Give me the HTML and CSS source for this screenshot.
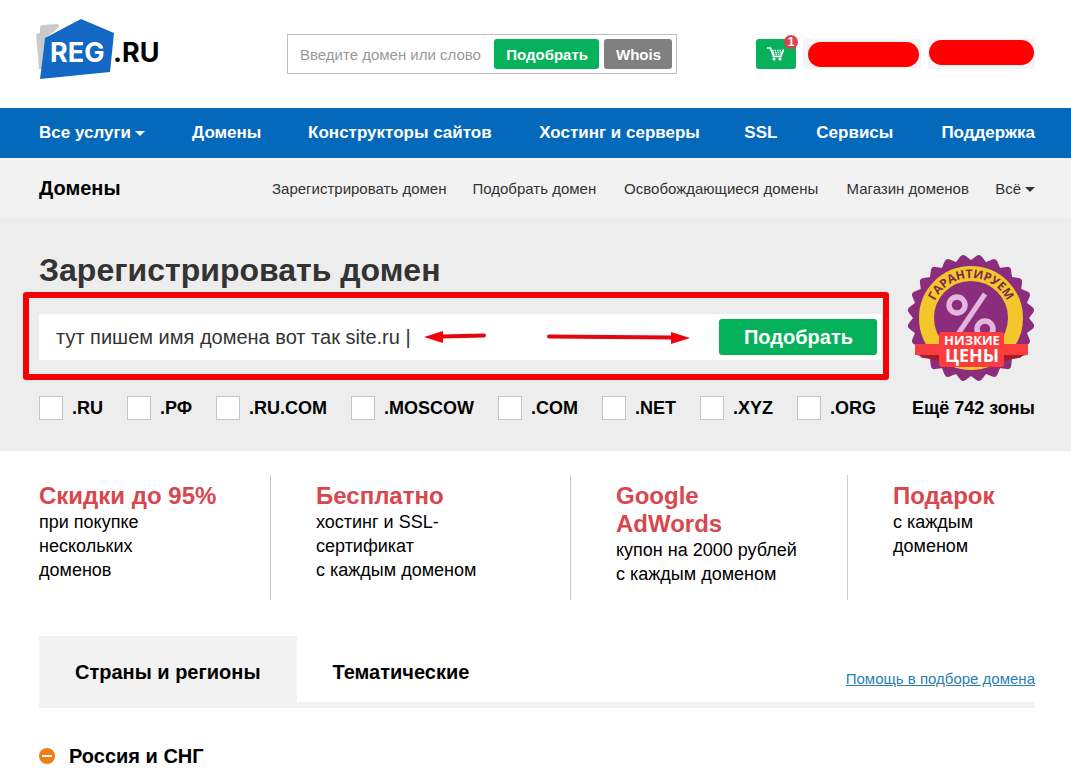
FILE: index.html
```html
<!DOCTYPE html>
<html lang="ru">
<head>
<meta charset="utf-8">
<title>REG.RU — Зарегистрировать домен</title>
<meta name="viewport" content="width=device-width, initial-scale=1">
<link rel="stylesheet" href="styles.css">
</head>
<body>
<header class="header wrap">
  <a class="logo" href="#" aria-label="REG.RU">
    <svg width="124" height="62" viewBox="0 0 124 62">
      <path fill="#c9caca" d="M0 15l4-1V9q0-3 3-3l14-1q2 0 2 3L9 20 5 50H3z"/>
      <path fill="#1268c3" d="M45 0l33 14-4 39-70 7L9 19z"/>
      <text class="logo-text logo-text-light" x="14" y="43">REG</text>
      <text class="logo-text" x="77" y="43">.RU</text>
    </svg>
  </a>
  <form class="quick">
    <input class="quick-input" type="text" placeholder="Введите домен или слово" aria-label="Домен или слово">
    <button class="btn btn-green" type="button">Подобрать</button>
    <button class="btn btn-grey" type="button">Whois</button>
  </form>
  <div class="account">
    <button class="cart" type="button" aria-label="Корзина">
      <svg width="18" height="14" viewBox="0 0 18 14" fill="none" stroke="#fff">
        <path stroke-width="1.600" d="M0 1h3.500l3 8.500h7.500L16.500 2.500"/>
        <path stroke-width="1.500" stroke-dasharray="1.500 1" d="M5 3.500h11M5.500 5.500h10M6 7.500h9"/>
        <circle cx="7" cy="12" r="1.600" fill="#fff" stroke="none"/>
        <circle cx="13" cy="12" r="1.600" fill="#fff" stroke="none"/>
      </svg>
      <span class="cart-count">1</span>
    </button>
    <button class="user user-login" type="button" aria-label="Вход"><span class="mask"></span></button>
    <button class="user user-signup" type="button" aria-label="Регистрация"><span class="mask"></span></button>
  </div>
</header>

<nav class="nav">
  <div class="wrap nav-grid">
    <a href="#">Все услуги<span class="caret"></span></a>
    <a href="#">Домены</a>
    <a href="#">Конструкторы сайтов</a>
    <a href="#">Хостинг и серверы</a>
    <a href="#">SSL</a>
    <a href="#">Сервисы</a>
    <a href="#">Поддержка</a>
  </div>
</nav>

<div class="subnav">
  <div class="wrap subnav-row">
    <h2 class="section-name">Домены</h2>
    <nav class="sublinks">
      <a href="#">Зарегистрировать домен</a>
      <a href="#">Подобрать домен</a>
      <a href="#">Освобождающиеся домены</a>
      <a href="#">Магазин доменов</a>
      <a href="#">Всё<span class="caret"></span></a>
    </nav>
  </div>
</div>

<main>
  <section class="hero">
    <form class="wrap">
      <div class="hero-top">
        <div class="hero-main">
          <h1>Зарегистрировать домен</h1>
          <div class="search">
            <input class="search-input" type="text" value="тут пишем имя домена вот так site.ru |" aria-label="Имя домена">
            <button class="btn btn-green btn-big" type="button">Подобрать</button>
            <span class="frame"></span>
            <svg class="arrows" width="266" height="16" viewBox="0 0 266 16" stroke="#e3060f" fill="#f00008">
              <path stroke-width="4" stroke-linecap="round" d="M18 7.500L60 6.500M125 7.500L248 8.500"/>
              <path stroke="none" d="M0 8l19-6v12zM266 9l-19-6v12z"/>
            </svg>
          </div>
        </div>
        <svg class="badge" width="128" height="128" viewBox="0 0 128 128">
          <defs>
            <path id="arc" d="M24 64a40 40 0 0 1 80 0"/>
            <rect id="sq" x="22" y="22" width="84" height="84"/>
          </defs>
          <g fill="#8c2c7c" stroke="#8c2c7c" stroke-width="8" stroke-linejoin="round">
            <use href="#sq" transform="rotate(7.500 64 64)"/>
            <use href="#sq" transform="rotate(22.500 64 64)"/>
            <use href="#sq" transform="rotate(37.500 64 64)"/>
            <use href="#sq" transform="rotate(52.500 64 64)"/>
            <use href="#sq" transform="rotate(67.500 64 64)"/>
            <use href="#sq" transform="rotate(82.500 64 64)"/>
          </g>
          <circle cx="64" cy="64" r="44.500" fill="none" stroke="#f3c72b" stroke-width="15"/>
          <text class="badge-arc"><textPath href="#arc" startOffset="50%">ГАРАНТИРУЕМ</textPath></text>
          <g fill="none" stroke="#e3b5df">
            <circle cx="50" cy="51" r="8" stroke-width="5.500"/>
            <circle cx="78" cy="75" r="8" stroke-width="5.500"/>
            <path stroke-width="5" d="M78 40L51 80"/>
          </g>
          <path fill="#a81c24" d="M10 101h22v6zM119 101H97v6z"/>
          <path fill="#fb3c3f" d="M8 90h24V81q0-3 3-3h59q3 0 3 3v9h24v11H97v9q0 3-3 3H35q-3 0-3-3v-9H8z"/>
          <text class="badge-text badge-small" x="65" y="91">НИЗКИЕ</text>
          <text class="badge-text badge-large" x="65" y="108">ЦЕНЫ</text>
        </svg>
      </div>
      <div class="zones">
        <label><input type="checkbox">.RU</label>
        <label><input type="checkbox">.РФ</label>
        <label><input type="checkbox">.RU.COM</label>
        <label><input type="checkbox">.MOSCOW</label>
        <label><input type="checkbox">.COM</label>
        <label><input type="checkbox">.NET</label>
        <label><input type="checkbox">.XYZ</label>
        <label><input type="checkbox">.ORG</label>
        <a href="#">Ещё 742 зоны</a>
      </div>
    </form>
  </section>

  <section class="wrap benefits">
    <div class="benefit"><h3>Скидки до 95%</h3><p>при покупке<br>нескольких<br>доменов</p></div>
    <div class="benefit"><h3>Бесплатно</h3><p>хостинг и SSL-<br>сертификат<br>с каждым доменом</p></div>
    <div class="benefit"><h3>Google<br>AdWords</h3><p>купон на 2000 рублей<br>с каждым доменом</p></div>
    <div class="benefit"><h3>Подарок</h3><p>с каждым<br>доменом</p></div>
  </section>

  <section class="wrap">
    <div class="tabs">
      <button class="tab tab-active" type="button">Страны и регионы</button>
      <button class="tab" type="button">Тематические</button>
      <a class="help" href="#">Помощь в подборе домена</a>
    </div>
    <h3 class="group">
      <svg width="16" height="16" viewBox="0 0 16 16"><circle cx="8" cy="8" r="8" fill="#f07d13"/><path stroke="#fff" stroke-width="2" d="M3 8h10"/></svg>
      Россия и СНГ
    </h3>
  </section>
</main>
</body>
</html>
```

FILE: styles.css
```css
* { box-sizing: border-box; }
body {
  margin: 0;
  background: #fff;
  color: #000;
  font-family: "Liberation Sans", Arial, sans-serif;
  font-size: 15px;
}
h1, h2, h3, p { margin: 0; }
a { color: inherit; text-decoration: none; }
button, input { font-family: inherit; border: 0; margin: 0; padding: 0; }
svg { display: block; flex: none; }
.wrap { padding-left: 39px; padding-right: 36px; }

.header {
  display: flex;
  align-items: center;
  height: 108px;
  padding-left: 36px;
}
.logo { padding-bottom: 8px; }
.logo-text { font: 700 27px Inter, sans-serif; fill: #000; }
.logo-text-light { fill: #fff; }
.quick {
  display: flex;
  gap: 5px;
  width: 390px;
  margin-left: 127px;
  padding: 4px;
  border: 1px solid #bfbfbf;
}
.quick-input {
  flex: 1;
  min-width: 0;
  padding-left: 8px;
  font-size: 15px;
  background: none;
}
.quick-input::placeholder { color: #999; opacity: 1; }
.btn {
  height: 30px;
  padding: 0 11px 0 12px;
  border-radius: 3px;
  color: #fff;
  font-size: 15px;
  font-weight: 700;
}
.btn-green { background: #05b15a; }
.btn-grey { background: #808080; }
.account { display: flex; gap: 7px; margin-left: auto; }
.cart {
  position: relative;
  display: flex;
  align-items: center;
  justify-content: center;
  width: 40px;
  height: 30px;
  border-radius: 3px;
  background: #05b15a;
}
.cart-count {
  position: absolute;
  top: -4px;
  right: -2px;
  width: 14px;
  height: 14px;
  border-radius: 50%;
  background: #d8434e;
  color: #fff;
  font-size: 12px;
  line-height: 14px;
  font-weight: 700;
}
.user {
  display: flex;
  height: 30px;
  background: #f5f3f5;
}
.user-login { width: 118px; padding: 3px 2px 3px 5px; }
.user-signup { width: 107px; padding: 1px; }
.mask { flex: 1; height: 25px; border-radius: 13px; background: #f00; }

.nav { background: #0468bb; color: #fff; }
.nav-grid {
  display: grid;
  grid-template-columns: 153fr 116fr 231fr 205fr 72fr 125fr auto;
  align-items: center;
  height: 50px;
  font-size: 17px;
  font-weight: 700;
  white-space: nowrap;
}
.caret {
  display: inline-block;
  margin-left: 4px;
  vertical-align: middle;
  border: 5px solid transparent;
  border-top-color: currentColor;
  border-bottom: 0;
}
.subnav { background: #f2f2f2; }
.subnav-row {
  display: grid;
  grid-template-columns: 233fr 763fr;
  align-items: center;
  height: 60px;
}
.section-name { font-size: 20px; }
.sublinks {
  display: grid;
  grid-template-columns: 201fr 152fr 223fr 149fr auto;
  color: #333;
  white-space: nowrap;
}

.hero { height: 233px; background: #ededed; }
.hero-top { display: flex; gap: 26px; padding-top: 36px; }
.hero-main { flex: 1; min-width: 0; }
h1 { color: #333; font-size: 32px; line-height: 32px; }
.search {
  position: relative;
  display: flex;
  align-items: center;
  height: 46px;
  margin-top: 28px;
  padding-right: 4px;
  background: #fff;
}
.search-input {
  flex: 1;
  min-width: 0;
  height: 46px;
  padding-left: 17px;
  background: none;
  color: #333;
  font-size: 20px;
}
.btn-big { width: 158px; height: 36px; font-size: 20px; }
.frame {
  position: absolute;
  inset: -22px -8px -20px -16px;
  border: 6px solid #f40006;
  border-radius: 3px;
  pointer-events: none;
}
.arrows { position: absolute; left: 385px; top: 15px; }
.badge-arc { font: 700 12px "Open Sans", sans-serif; fill: #7c2b4e; text-anchor: middle; }
.badge-text { font-family: "Open Sans", sans-serif; font-weight: 700; fill: #fff; text-anchor: middle; }
.badge-small { font-size: 13px; }
.badge-large { font-size: 18px; }
.zones {
  display: grid;
  grid-template-columns: 88fr 89fr 135fr 147fr 104fr 98fr 97fr 115fr auto;
  align-items: center;
  margin-top: 14px;
  font-size: 18px;
  font-weight: 700;
  white-space: nowrap;
}
.zones label { display: flex; align-items: center; gap: 9px; }
.zones input {
  appearance: none;
  width: 24px;
  height: 24px;
  background: #fff;
  border: 1px solid #c4c4c4;
}

.benefits {
  display: grid;
  grid-template-columns: 231fr 300fr 277fr 188fr;
  padding-top: 24px;
}
.benefit { min-height: 125px; padding-top: 7px; }
.benefit + .benefit { padding-left: 45px; border-left: 1px solid #c9c9c9; }
.benefit h3 { color: #d8474e; font-size: 24px; line-height: 28px; }
.benefit p { font-size: 18px; line-height: 24px; }

.tabs {
  display: flex;
  margin-top: 36px;
  border-bottom: 6px solid #f2f2f2;
}
.tab {
  height: 66px;
  padding: 6px 36px 0;
  background: none;
  font-size: 20px;
  font-weight: 700;
  color: #000;
}
.tab-active { background: #f2f2f2; }
.help {
  align-self: center;
  margin-left: auto;
  padding-top: 18px;
  color: #2a7fb0;
  text-decoration: underline;
}
.group {
  display: flex;
  align-items: center;
  gap: 14px;
  margin-top: 36px;
  font-size: 20px;
  line-height: 24px;
}
```
